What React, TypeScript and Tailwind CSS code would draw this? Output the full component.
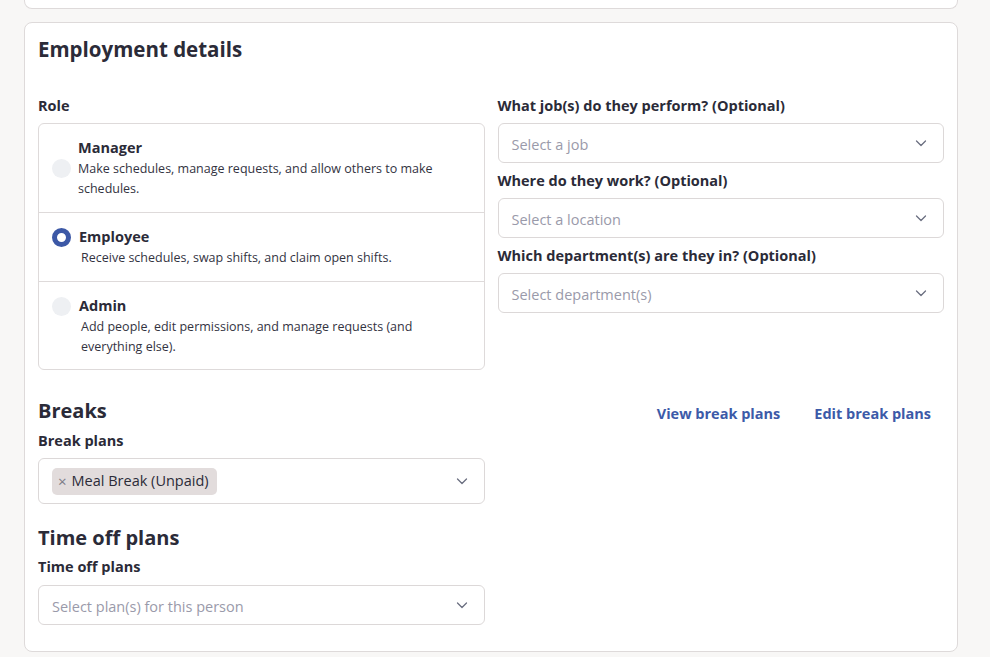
import React from "react";

const font = { fontFamily: "'Open Sans', 'Noto Sans', sans-serif" };

function Chevron() {
  return (
    <svg width="14" height="14" viewBox="0 0 14 14" fill="none" className="shrink-0">
      <path d="M2.5 5 L7 9.5 L11.5 5" stroke="#6b6f80" strokeWidth="1.3" strokeLinecap="round" strokeLinejoin="round" />
    </svg>
  );
}

function Select({ placeholder }: { placeholder: string }) {
  return (
    <div className="flex h-[40px] items-center justify-between rounded-[6px] border border-[#dcd8d8] bg-white pl-[13px] pr-[15px]">
      <span className="pt-[3px] text-[14.5px] text-[#9a9aaa]">{placeholder}</span>
      <Chevron />
    </div>
  );
}

function Label({ children }: { children: React.ReactNode }) {
  return <div className="text-[14.5px] font-bold leading-[20px] text-[#2b2b38]">{children}</div>;
}

function Radio({ checked }: { checked?: boolean }) {
  return checked ? (
    <div className="h-[19px] w-[19px] shrink-0 rounded-full border-[5px] border-[#3c58a6] bg-white" />
  ) : (
    <div className="h-[19px] w-[19px] shrink-0 rounded-full bg-[#eef0f3]" />
  );
}

export default function App() {
  return (
    <div className="min-h-[657px] w-[990px] bg-[#f8f7f6] text-[#2b2b38]" style={font}>
      <div className="ml-[24px] h-[9px] w-[934px] rounded-b-[8px] border-x border-b border-[#dedada] bg-white" />
      <div className="ml-[24px] mt-[13px] w-[934px] rounded-[8px] border border-[#dedada] bg-white px-[13px] pb-[26px] pt-[11px]">
        <h1 className="text-[20.5px] font-bold leading-[30px] text-[#2b2b38]">Employment details</h1>
        <div className="mt-[32px] grid grid-cols-2 gap-x-[13px]">
          <div className="flex flex-col">
            <Label>Role</Label>
            <div className="mt-[7px] rounded-[6px] border border-[#dedada]">
              <div className="flex items-center gap-[7px] border-b border-[#dedada] pb-[13px] pl-[13px] pr-[20px] pt-[13px]">
                <Radio />
                <div>
                  <div className="text-[14.5px] font-bold leading-[22px]">Manager</div>
                  <div className="text-[12.5px] leading-[20px] text-[#33333f]">
                    Make schedules, manage requests, and allow others to make schedules.
                  </div>
                </div>
              </div>
              <div className="flex flex-col border-b border-[#dedada] pb-[13px] pl-[13px] pr-[20px] pt-[13px]">
                <div className="flex items-center gap-[8px]">
                  <Radio checked />
                  <div className="text-[14.5px] font-bold leading-[22px]">Employee</div>
                </div>
                <div className="pl-[29px] text-[12.5px] leading-[20px] text-[#33333f]">
                  Receive schedules, swap shifts, and claim open shifts.
                </div>
              </div>
              <div className="flex flex-col pb-[12px] pl-[13px] pr-[40px] pt-[13px]">
                <div className="flex items-center gap-[8px]">
                  <Radio />
                  <div className="text-[14.5px] font-bold leading-[22px]">Admin</div>
                </div>
                <div className="pl-[29px] text-[12.5px] leading-[20px] text-[#33333f]">
                  Add people, edit permissions, and manage requests (and everything else).
                </div>
              </div>
            </div>
          </div>
          <div className="flex flex-col">
            <Label>What job(s) do they perform? (Optional)</Label>
            <div className="mt-[7px]">
              <Select placeholder="Select a job" />
            </div>
            <div className="mt-[8px]">
              <Label>Where do they work? (Optional)</Label>
            </div>
            <div className="mt-[7px]">
              <Select placeholder="Select a location" />
            </div>
            <div className="mt-[8px]">
              <Label>Which department(s) are they in? (Optional)</Label>
            </div>
            <div className="mt-[7px]">
              <Select placeholder="Select department(s)" />
            </div>
          </div>
        </div>

        <div className="mt-[27px] grid grid-cols-2 gap-x-[13px]">
          <div className="flex flex-col">
            <h2 className="text-[20px] font-bold leading-[28px]">Breaks</h2>
            <div className="mt-[6px]">
              <Label>Break plans</Label>
            </div>
            <div className="mt-[7px] flex h-[46px] items-center justify-between rounded-[6px] border border-[#dcd8d8] bg-white pl-[13px] pr-[15px]">
              <div className="flex h-[27px] items-center gap-[5px] rounded-[5px] bg-[#e2dcdc] pl-[6px] pr-[8px]">
                <span className="text-[15px] leading-none text-[#7a7a85]">×</span>
                <span className="text-[14.5px] text-[#2b2b38]">Meal Break (Unpaid)</span>
              </div>
              <Chevron />
            </div>
            <h2 className="mt-[20px] text-[20px] font-bold leading-[28px]">Time off plans</h2>
            <div className="mt-[5px]">
              <Label>Time off plans</Label>
            </div>
            <div className="mt-[8px]">
              <Select placeholder="Select plan(s) for this person" />
            </div>
          </div>
          <div className="flex items-start justify-end gap-[34px] pr-[13px] pt-[7px]">
            <span className="text-[14.5px] font-bold leading-[20px] text-[#3c5aa8]">View break plans</span>
            <span className="text-[14.5px] font-bold leading-[20px] text-[#3c5aa8]">Edit break plans</span>
          </div>
        </div>
      </div>
    </div>
  );
}
